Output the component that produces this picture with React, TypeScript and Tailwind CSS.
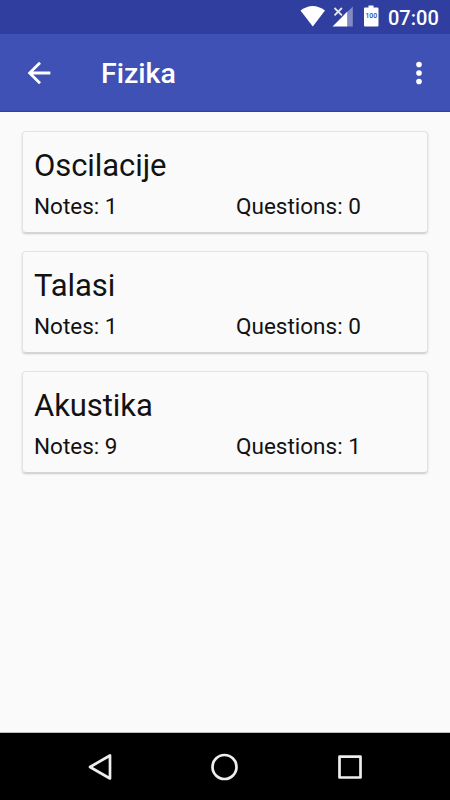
type Chapter = {
  title: string;
  notes: number;
  questions: number;
};

const chapters: Chapter[] = [
  { title: "Oscilacije", notes: 1, questions: 0 },
  { title: "Talasi", notes: 1, questions: 0 },
  { title: "Akustika", notes: 9, questions: 1 },
];

export default function App() {
  return (
    <div className="flex h-[800px] w-[450px] flex-col bg-[#fafafa] font-['Roboto',sans-serif] text-[#121212]">
      <StatusBar />
      <Toolbar title="Fizika" />
      <main className="flex flex-1 flex-col gap-[18px] border-b border-[#bdbdbd] px-[22px] pt-[19px]">
        {chapters.map((chapter) => (
          <ChapterCard key={chapter.title} chapter={chapter} />
        ))}
      </main>
      <NavigationBar />
    </div>
  );
}

function StatusBar() {
  return (
    <div className="flex h-[34px] shrink-0 items-center justify-end bg-[#303f9f] pr-[11px] text-white">
      <StatusIcons />
      <span className="w-[51px] pt-px text-[20px] font-medium leading-none">07:00</span>
    </div>
  );
}

function StatusIcons() {
  return (
    <svg className="h-[34px] w-[88px]" viewBox="300 0 88 34" fill="#fff" aria-hidden="true">
      {/* wifi */}
      <path d="M300.500 10.500Q312.800 1.500 325 10.500L312.800 26.500z" />
      {/* cell signal, no data */}
      <path d="M352.800 6.500V26.500H347.300V12z" opacity="0.4" />
      <path d="M347.300 11.500V26.500H332.500L342.500 16.500z" />
      <path d="M334.500 8l7.400 7.400M341.900 8l-7.400 7.400" stroke="#e4e6f4" strokeWidth="1.800" />
      {/* battery */}
      <path d="M368.500 5.500h5v2h4a1 1 0 0 1 1 1v17a1 1 0 0 1-1 1h-12.500a1 1 0 0 1-1-1v-17a1 1 0 0 1 1-1h3.500z" />
      <text x="371.300" y="18.300" textAnchor="middle" fontSize="6.800" fontWeight="500" fill="#303f9f">
        100
      </text>
    </svg>
  );
}

function Toolbar({ title }: { title: string }) {
  return (
    <header className="flex h-[78px] shrink-0 items-center border-b border-[#2c3fae] bg-[#3f51b5] text-white">
      <button type="button" className="ml-[22px] pt-px" aria-label="Back">
        <svg className="h-[34px] w-[34px]" viewBox="0 0 24 24" fill="currentColor">
          <path d="M20 11H7.830l5.590-5.590L12 4l-8 8 8 8 1.410-1.410L7.830 13H20z" />
        </svg>
      </button>
      <h1 className="ml-[45px] flex-1 pt-[3px] text-[28.5px] font-medium leading-[36px]">{title}</h1>
      <button type="button" className="mr-[14px]" aria-label="More options">
        <svg className="h-[34px] w-[34px]" viewBox="0 0 24 24" fill="currentColor">
          <path d="M12 8a2 2 0 1 0 0-4 2 2 0 0 0 0 4zm0 2a2 2 0 1 0 0 4 2 2 0 0 0 0-4zm0 6a2 2 0 1 0 0 4 2 2 0 0 0 0-4z" />
        </svg>
      </button>
    </header>
  );
}

function ChapterCard({ chapter }: { chapter: Chapter }) {
  return (
    <section className="h-[102px] rounded-[4px] border border-[#e3e3e3] border-b-[#d4d4d4] px-[11px] pt-[14px] shadow-[0_1px_2px_rgba(0,0,0,0.2)]">
      <h2 className="text-[31px] leading-[40px] tracking-[-0.07px]">{chapter.title}</h2>
      <div className="flex text-[22.5px] leading-[40px]">
        <span className="w-[202px]">Notes: {chapter.notes}</span>
        <span>Questions: {chapter.questions}</span>
      </div>
    </section>
  );
}

function NavigationBar() {
  return (
    <nav className="flex h-[67px] shrink-0 bg-black">
      <svg className="h-[67px] w-[450px]" viewBox="0 0 450 67" fill="none" stroke="#eee" strokeWidth={2.700} strokeLinejoin="round" aria-hidden="true">
        <path d="M110 22.500v23L90 34z" />
        <circle cx="224.500" cy="34" r="12" />
        <path d="M339.500 23.700h21v20.800h-21z" />
      </svg>
    </nav>
  );
}
